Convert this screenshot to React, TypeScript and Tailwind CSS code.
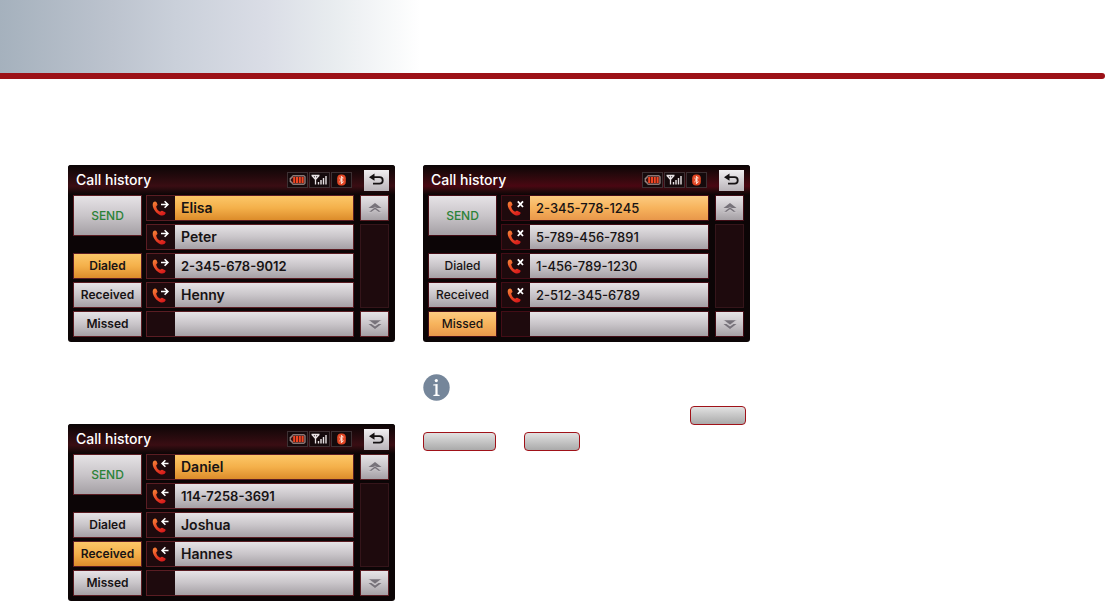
/**
 * PURPOSE: Manual page showing the call history screens of the phone head unit
 * INPUTS: None (records are listed below)
 * OUTPUTS: Page banner, three call history screens and an info note
 */

import clsx from 'clsx'

type CallKind = 'Dialed' | 'Received' | 'Missed'

const TABS: CallKind[] = ['Dialed', 'Received', 'Missed']

const DIALED = ['Elisa', 'Peter', '2-345-678-9012', 'Henny', '']
const RECEIVED = ['Daniel', '114-7258-3691', 'Joshua', 'Hannes', '']
const MISSED = ['2-345-778-1245', '5-789-456-7891', '1-456-789-1230', '2-512-345-6789', '']

const SILVER = 'bg-linear-to-b from-[#e6e3e6] via-[#c9c5c9] to-[#a5a0a5]'
const AMBER = 'bg-linear-to-b from-[#fcc768] via-[#f4b04a] to-[#dc8c2a]'
const AMBER_SOFT = 'bg-linear-to-b from-[#fccb80] via-[#f7b35c] to-[#e8974a]'

function isNumber(record: string): boolean {
  return /^\d/.test(record)
}

function CallIcon({ kind }: { kind: CallKind }) {
  return (
    <svg width="20" height="18" viewBox="0 0 20 18" fill="none" aria-hidden="true">
      <defs>
        <linearGradient id="handset" x1="0" y1="0" x2="0.7" y2="1">
          <stop offset="0" stopColor="#f58a3a" />
          <stop offset="0.5" stopColor="#ea4a24" />
          <stop offset="1" stopColor="#d81d1c" />
        </linearGradient>
      </defs>
      <path
        d="M2.2 3.4C3 2.4 4.6 2 5.4 3L6.4 5.2C6.7 6 6.2 6.6 5.3 7.1C5 9.2 7.2 12.2 9.2 12.8C10 12 10.8 11.6 11.6 12L14.2 13.3C15 13.9 14.6 15 13.6 15.8C11.6 17.2 8.8 16.6 6.2 14.2C3 11.4 .6 6.2 2.2 3.4Z"
        fill="url(#handset)"
      />
      {kind === 'Dialed' && (
        <path d="M10 5.5H17M13.6 2.2L16.9 5.5L13.6 8.8" stroke="#fff" strokeWidth="1.6" />
      )}
      {kind === 'Received' && (
        <path d="M17.5 5.5H11M14.4 2.2L11.1 5.5L14.4 8.8" stroke="#fff" strokeWidth="1.6" />
      )}
      {kind === 'Missed' && (
        <path d="M11.8 2.4L17 8M17 2.4L11.8 8" stroke="#fff" strokeWidth="1.8" />
      )}
    </svg>
  )
}

function StatusIcons() {
  const box =
    'flex h-4 w-[21px] items-center justify-center border border-[#3d3033] bg-[#150a0c]'
  return (
    <div className="flex gap-px">
      {/* Battery */}
      <span className={box}>
        <svg width="17" height="10" viewBox="0 0 17 10" aria-hidden="true">
          <path
            d="M4 .8H15Q16 .8 16 1.8V8.2Q16 9.2 15 9.2H4Q3 9.2 3 8.2V7H1.2V3H3V1.8Q3 .8 4 .8Z"
            fill="#3a1210"
            stroke="#b5a5a3"
            strokeWidth="1"
          />
          <path d="M5.2 2V8M8 2V8M10.8 2V8M13.6 2V8" stroke="#f04522" strokeWidth="2" />
        </svg>
      </span>
      {/* Antenna */}
      <span className={box}>
        <svg width="17" height="12" viewBox="0 0 17 12" fill="none" stroke="#e8e2e4" aria-hidden="true">
          <path d="M.5 1.5H8.5M1 1.5L4.5 5.5L8 1.5M4.5 1.5V10.5" strokeWidth="1.3" />
          <path d="M7.5 10.5V8M10 10.5V6M12.5 10.5V4M15 10.5V2" strokeWidth="1.4" />
        </svg>
      </span>
      {/* Bluetooth */}
      <span className={box}>
        <svg width="11" height="12" viewBox="0 0 11 12" fill="none" aria-hidden="true">
          <rect x="1.2" y=".4" width="8.6" height="11.2" rx="3.8" fill="#e24624" />
          <path d="M3.4 4L7.3 7.7L5.4 9.8V2.2L7.3 4.2L3.4 8" stroke="#ffe3d8" strokeWidth="1" />
        </svg>
      </span>
    </div>
  )
}

function ScrollButton({ direction, frame }: { direction: 'up' | 'down'; frame: string }) {
  return (
    <button
      aria-label={direction === 'up' ? 'Scroll up' : 'Scroll down'}
      className={clsx('flex h-[26px] items-center justify-center border', frame, SILVER)}
    >
      <svg width="16" height="12" viewBox="0 0 16 12" fill="#77727a" aria-hidden="true">
        {direction === 'up' ? (
          <>
            <path d="M8 1L14.5 6H1.5Z" />
            <path d="M8 5L14.5 10H11.5L8 7.6L4.5 10H1.5Z" stroke="#d4d0d4" strokeWidth=".5" />
          </>
        ) : (
          <>
            <path d="M1.5 6H4.5L8 8.6L11.5 6H14.5L8 11Z" />
            <path d="M8 7L14.5 2H1.5Z" stroke="#d4d0d4" strokeWidth=".5" />
          </>
        )}
      </svg>
    </button>
  )
}

function CallHistory({ kind, records }: { kind: CallKind; records: string[] }) {
  const missed = kind === 'Missed'
  const frame = missed ? 'border-[#430d16]' : 'border-[#5a1d23]'
  const weight = missed ? 'font-medium' : 'font-semibold'
  const active = missed ? AMBER_SOFT : AMBER

  return (
    <section className="overflow-hidden rounded-[3px] bg-[#0c0506] pb-[5px]">
      <header
        className={clsx(
          'flex h-[30px] items-center justify-between bg-linear-to-b from-[#0b0506] via-70% to-[#0b0506] pr-[6px] pl-2',
          missed ? 'via-[#4a0712]' : 'via-[#3a0d13]',
        )}
      >
        <h2 className="text-[14px] leading-[18px] font-medium text-white">Call history</h2>
        <div className="flex items-center gap-3">
          <StatusIcons />
          <button
            aria-label="Back"
            className="flex h-[21px] w-[25px] items-center justify-center bg-linear-to-b from-[#f1eff1] to-[#b9b4b9]"
          >
            <svg width="17" height="14" viewBox="0 0 17 14" fill="none" aria-hidden="true">
              <path d="M5.5 4.2H11.5C15.8 4.2 15.8 10.6 11.5 10.6H5" stroke="#151112" strokeWidth="1.8" />
              <path d="M1 4.2L6.5 .6V7.8Z" fill="#151112" />
            </svg>
          </button>
        </div>
      </header>

      <div className="flex pr-[6px] pl-[5px]">
        {/* Left: send and list tabs */}
        <div className="mr-1 flex w-[69px] flex-col">
          <button
            className={clsx(
              'h-[41px] border text-[12px] leading-4 font-medium text-[#2c8238]',
              frame,
              SILVER,
            )}
          >
            SEND
          </button>
          <div className="mt-auto flex flex-col gap-[3px]">
            {TABS.map((tab) => (
              <button
                key={tab}
                className={clsx(
                  'h-[26px] border text-[12px] leading-4 text-[#171314]',
                  frame,
                  weight,
                  tab === kind ? active : SILVER,
                )}
              >
                {tab}
              </button>
            ))}
          </div>
        </div>

        {/* Middle: records */}
        <ul className="mr-[6px] flex flex-1 flex-col gap-[3px]">
          {records.map((record, i) => (
            <li key={i} className={clsx('flex h-[26px] border bg-[#1e0a0d]', frame)}>
              <span className="flex w-7 items-center justify-center">
                {record && <CallIcon kind={kind} />}
              </span>
              <button
                aria-label={record || 'Empty entry'}
                className={clsx(
                  'flex-1 px-[6px] text-left leading-4 text-[#171314]',
                  isNumber(record) ? 'text-[13px]' : 'text-[14px]',
                  weight,
                  i === 0 ? active : SILVER,
                )}
              >
                {record}
              </button>
            </li>
          ))}
        </ul>

        {/* Right: scroll bar */}
        <div className="flex w-[29px] flex-col gap-[3px]">
          <ScrollButton direction="up" frame={frame} />
          <div className="flex-1 border border-[#35151a] bg-[#1e0a0d]" />
          <ScrollButton direction="down" frame={frame} />
        </div>
      </div>
    </section>
  )
}

function KeyCap({ label, wide }: { label: string; wide?: boolean }) {
  return (
    <button
      aria-label={label}
      className={clsx(
        'h-[19px] rounded-[4px] border border-[#a01219] bg-linear-to-b from-[#e2e2e2] to-[#aaaaaa]',
        wide ? 'w-[73px]' : 'w-14',
      )}
    />
  )
}

function InfoNote() {
  return (
    <aside className="mt-8">
      <svg width="27" height="27" viewBox="0 0 27 27" role="img" aria-label="Information">
        <circle cx="13.5" cy="13.5" r="13.2" fill="#75869a" />
        <circle cx="13.3" cy="6.6" r="1.6" fill="#fff" />
        <path d="M10.2 10.6L14.6 9.9V20.6L16.6 21.1V22H10.4V21.1L12.4 20.6V11.6L10.2 11.4Z" fill="#fff" />
      </svg>
      <div className="mt-[5px] flex justify-end pr-1">
        <KeyCap label="Dialed" />
      </div>
      <div className="mt-[7px] flex gap-7">
        <KeyCap label="Received" wide />
        <KeyCap label="Missed" />
      </div>
    </aside>
  )
}

export default function App() {
  return (
    <div className="bg-white font-['Inter',sans-serif]">
      <div className="h-[73px] bg-[linear-gradient(90deg,#a5b1bd_0%,#bcc3ce_10%,#cad0da_16%,#dadde6_24%,#e8ecef_30%,#ffffff_38%)]" />
      <div className="mr-px h-[6px] rounded-r-full bg-[#9c1117]" />

      <main className="grid grid-cols-3 gap-7 pt-[86px] pr-px pl-[68px]">
        <div className="flex flex-col gap-[82px]">
          <CallHistory kind="Dialed" records={DIALED} />
          <CallHistory kind="Received" records={RECEIVED} />
        </div>
        <div>
          <CallHistory kind="Missed" records={MISSED} />
          <InfoNote />
        </div>
      </main>
    </div>
  )
}
